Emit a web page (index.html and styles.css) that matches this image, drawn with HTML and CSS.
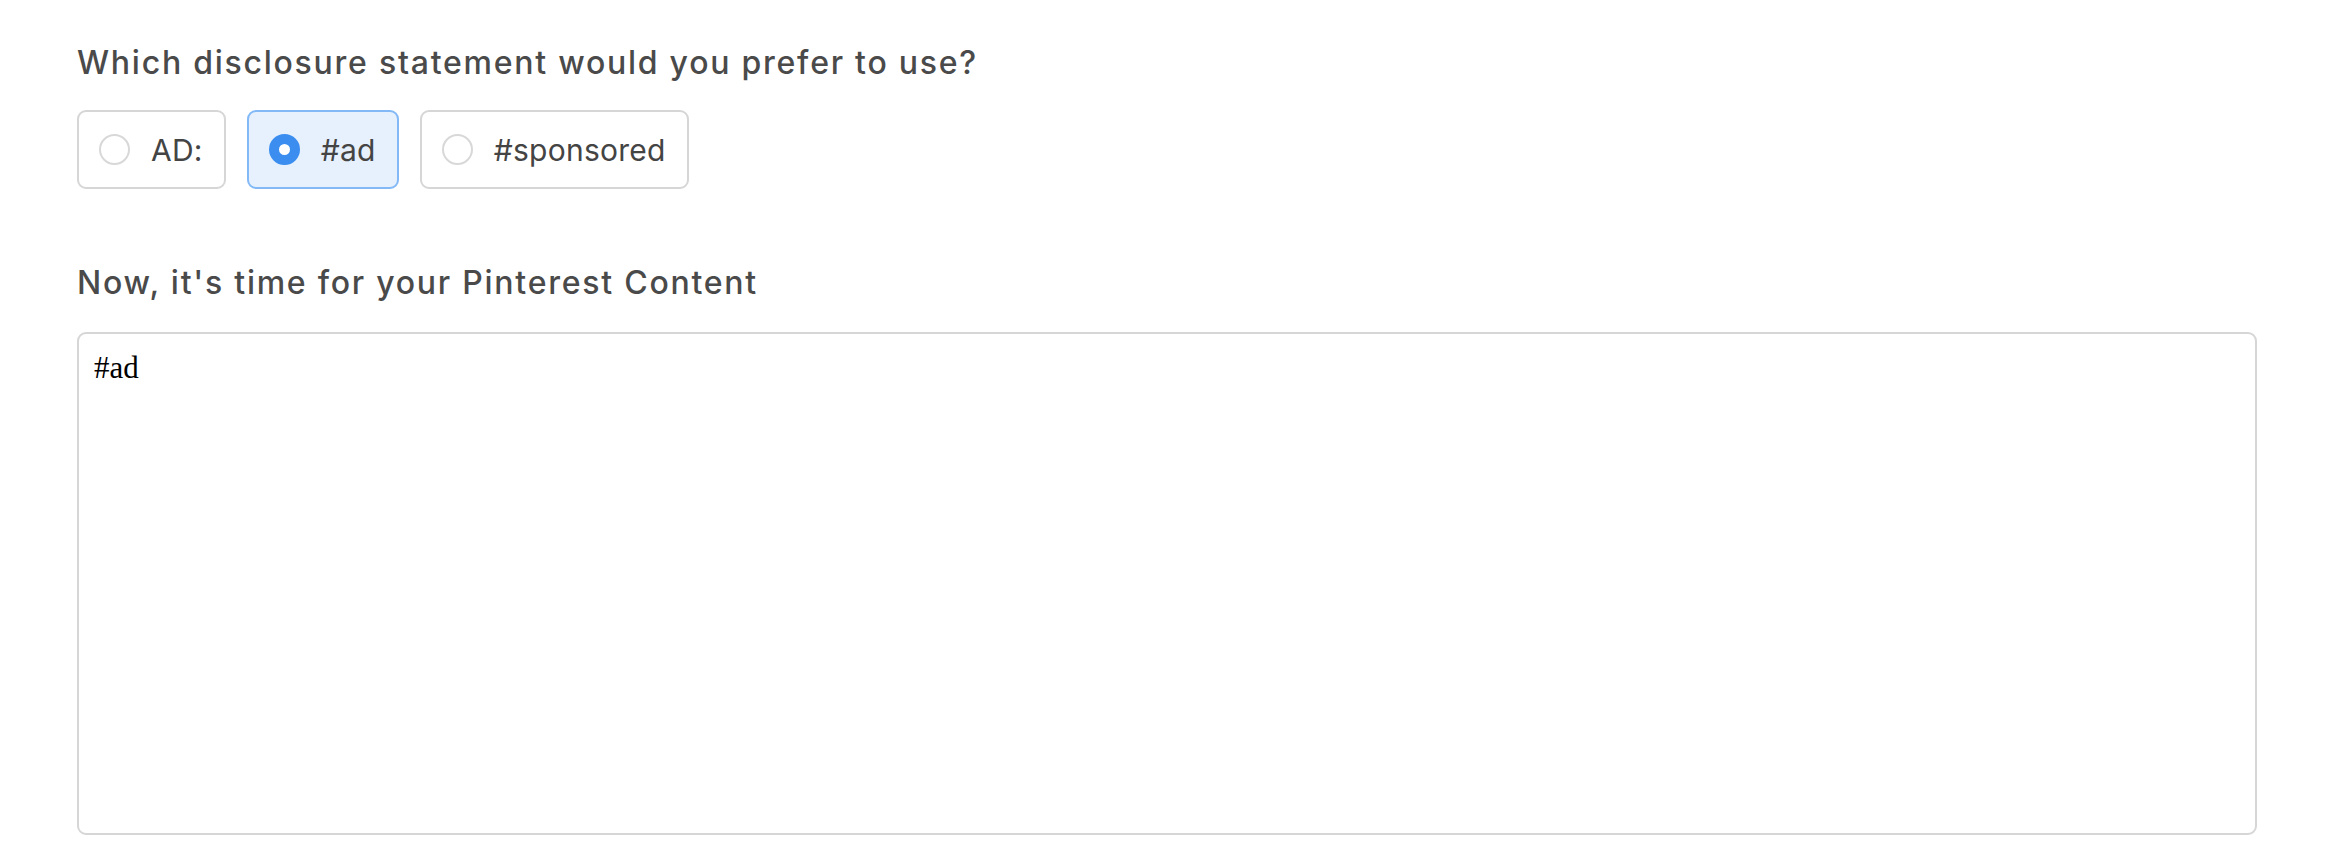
FILE: index.html
```html
<!DOCTYPE html>
<html lang="en">
<head>
<meta charset="utf-8">
<title>Disclosure</title>
<link rel="stylesheet" href="styles.css">
</head>
<body>
<main class="form">
  <section class="group">
    <h2 class="label">Which disclosure statement would you prefer to use?</h2>
    <div class="options">
      <label class="option"><span class="radio"></span><span class="option-text">AD:</span></label>
      <label class="option selected"><span class="radio checked"></span><span class="option-text">#ad</span></label>
      <label class="option"><span class="radio"></span><span class="option-text">#sponsored</span></label>
    </div>
  </section>
  <section class="group content-group">
    <h2 class="label">Now, it's time for your Pinterest Content</h2>
    <div class="content-box">#ad</div>
  </section>
</main>
</body>
</html>
```

FILE: styles.css
```css
html, body {
  margin: 0;
  padding: 0;
  background: #ffffff;
}

.form {
  padding: 45px 77px 0 77px;
  font-family: "Inter", "Liberation Sans", sans-serif;
  color: #4a4a4a;
}

.label {
  margin: 0;
  font-size: 32px;
  line-height: 36px;
  font-weight: 500;
  color: #4a4a4a;
  letter-spacing: 1.75px;
}

.options {
  display: flex;
  gap: 21px;
  margin-top: 29px;
}

.option {
  box-sizing: border-box;
  height: 79px;
  display: flex;
  align-items: center;
  gap: 21px;
  padding: 0 21px 0 20px;
  border: 2px solid #d6d6d6;
  border-radius: 9px;
  background: #ffffff;
}

.option.selected {
  background: #e6f1fd;
  border-color: #82b9f6;
}

.radio {
  box-sizing: border-box;
  width: 31px;
  height: 31px;
  border-radius: 50%;
  border: 2px solid #d8d8d8;
  background: #ffffff;
  flex: none;
}

.radio.checked {
  border: 10px solid #3b8eef;
  background: #ffffff;
}

.option-text {
  font-size: 30px;
  font-weight: 400;
  color: #444444;
  letter-spacing: 0.25px;
}

.content-group {
  margin-top: 76px;
}

.content-box {
  box-sizing: border-box;
  margin-top: 31px;
  height: 503px;
  border: 2px solid #d6d6d6;
  border-radius: 9px;
  padding: 16px 15px;
  font-family: "Liberation Serif", serif;
  font-size: 31px;
  color: #000000;
}
```
